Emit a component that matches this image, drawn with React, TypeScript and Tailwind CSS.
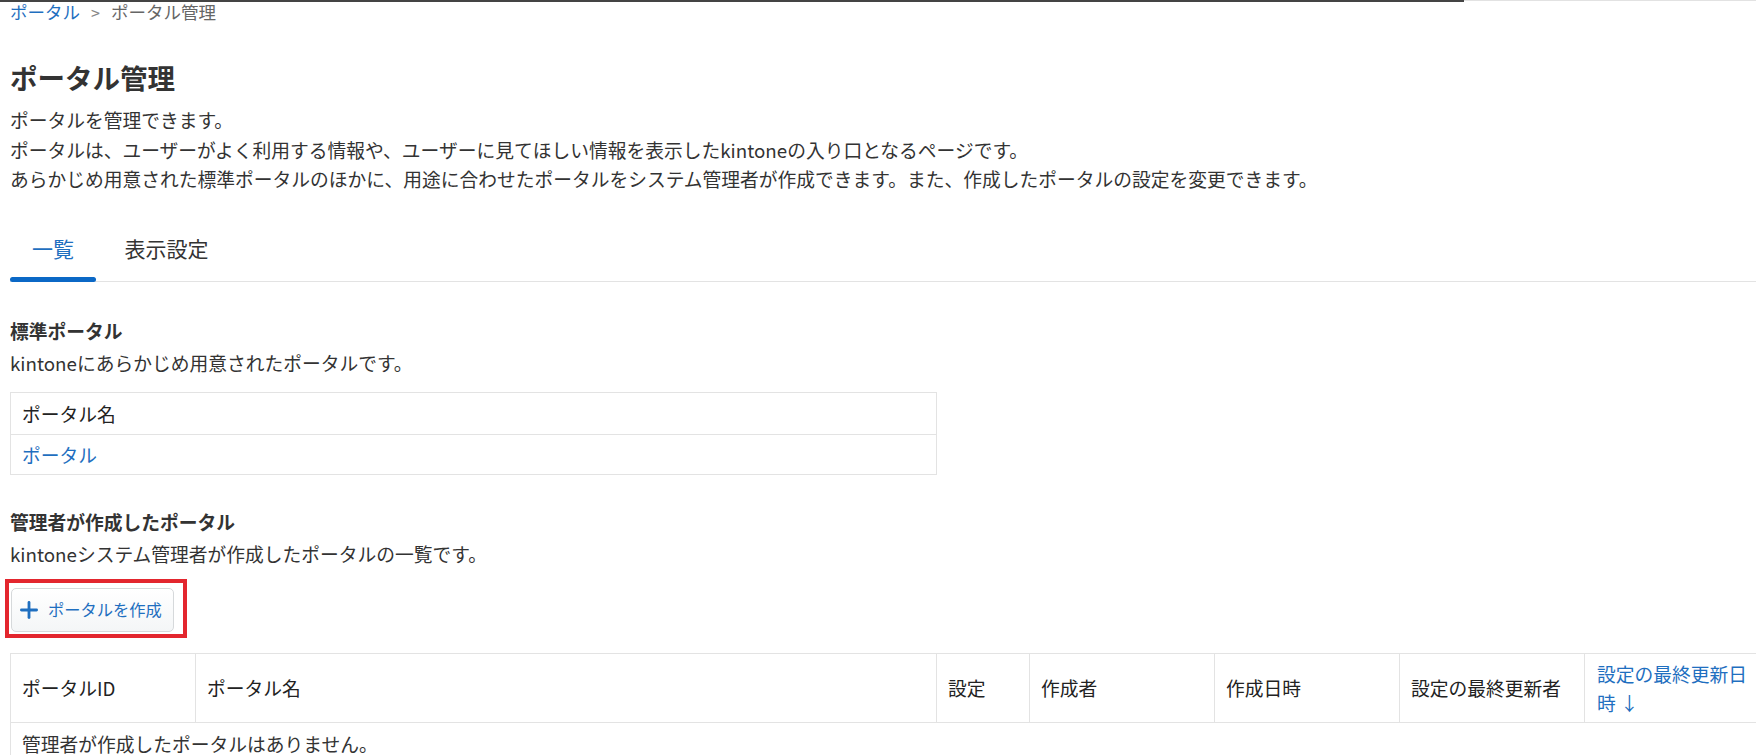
import { Plus } from 'lucide-react'

const headers = ['ポータルID', 'ポータル名', '設定', '作成者', '作成日時', '設定の最終更新者']

export default function App() {
  return (
    <div className="w-[1756px] h-[755px] overflow-hidden bg-white text-[#333] font-['Noto_Sans_CJK_JP','Noto_Sans',sans-serif]">
      <div className="flex items-start">
        <div className="w-[1464px] h-[2px] bg-[#444]" />
        <div className="flex-1 h-px bg-[#e2e2e2]" />
      </div>

      <div className="pl-[10px]">
        <div className="flex items-center gap-[11px] text-[17.5px] leading-[20px]">
          <a className="text-[#1f6fc0]">ポータル</a>
          <span className="text-[#888] text-[16px]">&gt;</span>
          <span className="text-[#666]">ポータル管理</span>
        </div>

        <h1 className="mt-[37px] text-[27.5px] leading-[36px] font-bold text-[#333]">ポータル管理</h1>

        <div className="mt-[10px] text-[18.75px] leading-[29.5px]">
          <p>ポータルを管理できます。</p>
          <p>ポータルは、ユーザーがよく利用する情報や、ユーザーに見てほしい情報を表示したkintoneの入り口となるページです。</p>
          <p>あらかじめ用意された標準ポータルのほかに、用途に合わせたポータルをシステム管理者が作成できます。また、作成したポータルの設定を変更できます。</p>
        </div>

        <div className="mt-[39px]">
          <div className="flex items-end gap-[6px] -mb-px">
            <div className="flex flex-col w-[86px]">
              <span className="text-center text-[21px] leading-[30px] text-[#1f6fc0]">一覧</span>
              <div className="relative z-10 mt-[14px] h-[5px] rounded-full bg-[#0b68c6]" />
            </div>
            <div className="flex flex-col w-[129px]">
              <span className="text-center text-[21px] leading-[30px] text-[#333]">表示設定</span>
              <div className="mt-[14px] h-[5px]" />
            </div>
          </div>
          <div className="h-px bg-[#e3e3e3]" />
        </div>

        <h2 className="mt-[35px] text-[18.75px] leading-[28px] font-bold">標準ポータル</h2>
        <p className="mt-[3px] text-[18.75px] leading-[29px]">kintoneにあらかじめ用意されたポータルです。</p>

        <table className="mt-[15px] w-[927px] border-collapse text-[18.75px] leading-[29px]">
          <tbody>
            <tr>
              <td className="border border-[#e3e3e3] px-[11px] py-[6px] text-[#222]">ポータル名</td>
            </tr>
            <tr>
              <td className="border border-[#e3e3e3] px-[11px] py-[5px]">
                <a className="text-[#1f6fc0]">ポータル</a>
              </td>
            </tr>
          </tbody>
        </table>

        <h2 className="mt-[33px] text-[18.75px] leading-[28px] font-bold">管理者が作成したポータル</h2>
        <p className="mt-[3px] text-[18.75px] leading-[29px]">kintoneシステム管理者が作成したポータルの一覧です。</p>

        <div className="mt-[11px] -ml-[5px] inline-block border-4 border-[#e3262e] pl-[2px] pt-[5px] pr-[9px] pb-[2px]">
          <button className="flex items-center h-[44px] w-[163px] pl-[4px] gap-[6px] rounded-[5px] border border-[#d6d9db] bg-gradient-to-b from-white to-[#f4f6f7] text-[16.25px] text-[#1f6fc0]">
            <Plus className="w-[26px] h-[26px] shrink-0" strokeWidth={2.6} />
            <span>ポータルを作成</span>
          </button>
        </div>

        <table className="mt-[15px] table-fixed w-[1759px] border-collapse text-[18.75px] leading-[29px]">
          <colgroup>
            <col className="w-[185px]" />
            <col className="w-[741px]" />
            <col className="w-[93px]" />
            <col className="w-[185px]" />
            <col className="w-[185px]" />
            <col className="w-[185px]" />
            <col className="w-[185px]" />
          </colgroup>
          <thead>
            <tr>
              {headers.map(h => (
                <th key={h} className="border border-[#e3e3e3] px-[11px] py-[5px] h-[69px] text-left font-normal text-[#222] align-middle">{h}</th>
              ))}
              <th className="border border-[#e3e3e3] pl-[12px] pr-[11px] py-[5px] text-left font-normal text-[#1f6fc0] align-middle">
                設定の最終更新日時 ↓
              </th>
            </tr>
          </thead>
          <tbody>
            <tr>
              <td colSpan={7} className="border border-[#e3e3e3] px-[11px] py-[6px]">管理者が作成したポータルはありません。</td>
            </tr>
          </tbody>
        </table>
      </div>
    </div>
  )
}
